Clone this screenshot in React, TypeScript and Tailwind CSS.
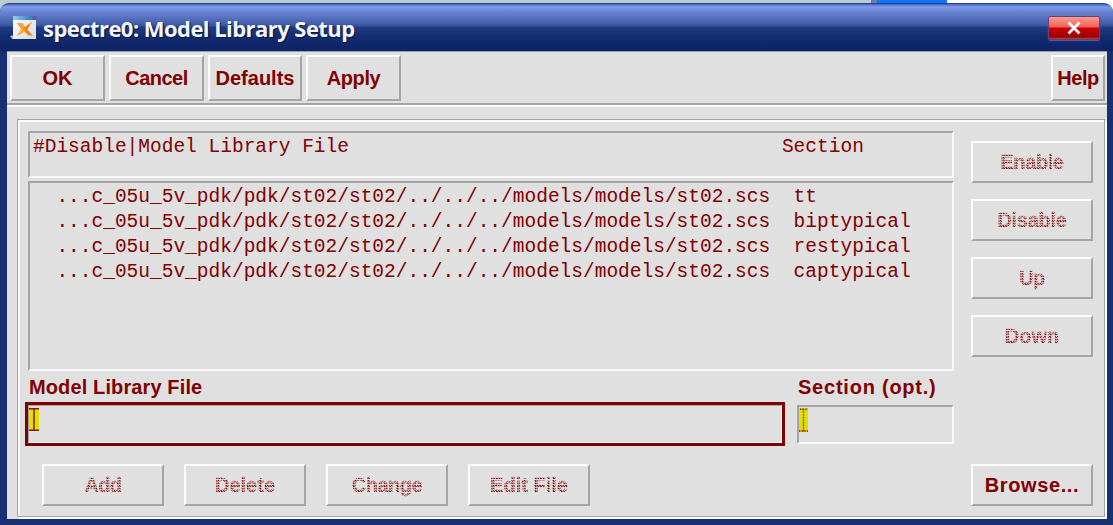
import type { ReactNode } from 'react';
import clsx from 'clsx';

const raised =
  'flex items-center justify-center whitespace-nowrap border-2 border-t-[#fbfbfb] border-l-[#fbfbfb] border-r-[#a4a4a4] border-b-[#a4a4a4]';
const sunken = 'border-2 border-t-[#a4a4a4] border-l-[#a4a4a4] border-r-[#f8f8f8] border-b-[#f8f8f8]';
const stipple =
  '[-webkit-text-stroke:0.3px_#800000] [mask-image:repeating-conic-gradient(#000_0_25%,transparent_0_50%)] [mask-size:2.6px_2.6px]';

function Button({ className, textClass, disabled, children }: {
  className: string;
  textClass?: string;
  disabled?: boolean;
  children: ReactNode;
}) {
  return (
    <button type="button" disabled={disabled} className={clsx(raised, className)}>
      <span className={clsx('block', textClass, disabled && stipple)}>{children}</span>
    </button>
  );
}

function AppIcon() {
  return (
    <svg width="27" height="26" viewBox="0 0 27 26" className="shrink-0">
      <defs>
        <linearGradient id="page" x1="0" y1="0" x2="1" y2="1">
          <stop offset="0" stopColor="#ffffff" />
          <stop offset="1" stopColor="#d2dce4" />
        </linearGradient>
        <linearGradient id="bar" x1="0" y1="0" x2="1" y2="0">
          <stop offset="0" stopColor="#8fd0f0" />
          <stop offset="1" stopColor="#1c62c8" />
        </linearGradient>
      </defs>
      <path d="M0 21 L4 20 L6 24 L2 24Z" fill="#a9b5c4" />
      <rect x="3" y="1" width="23" height="23" fill="url(#page)" />
      <rect x="3" y="1" width="23" height="4" fill="url(#bar)" />
      <rect x="20" y="2" width="2" height="2" fill="#20b070" />
      <rect x="23" y="2" width="2" height="2" fill="#d83050" />
      <path d="M7 8 L12 8 L15 12 L22 6.500 L17.500 14.500 L23 21 L18 20 L14.500 16.500 L7 21 L11.500 14Z" fill="#f58218" />
      <path d="M7 8 L12 8 L15 13 L11.500 14Z" fill="#fba23c" />
      <path d="M11.500 14 L15 15 L14.500 16.500 L7 21Z" fill="#ffb516" />
    </svg>
  );
}

const PATH = '...c_05u_5v_pdk/pdk/st02/st02/../../../models/models/st02.scs';
const sections = ['tt', 'biptypical', 'restypical', 'captypical'];

export default function App() {
  return (
    <div className="relative flex h-[525px] w-[1113px] flex-col overflow-hidden bg-[#173074] font-['Liberation_Sans',sans-serif] text-[20px] leading-[24px] font-bold text-[#800000]">
      <div className="flex h-[11px] shrink-0 bg-[#bccbc9]">
        <div className="ml-[871px] w-[6px] bg-[#7078b4]" />
        <div className="w-[70px] bg-[#0878f8]" />
        <div className="flex-1 bg-white" />
      </div>
      <header className="z-10 -mt-[8px] flex h-[48px] shrink-0 items-center rounded-t-[9px] border-t border-[#24409a] bg-[linear-gradient(#4564b8_0,#809bea_3px,#6d88d6_7px,#4864b0_18px,#38549f_22px,#213c84_23px,#132c70_33px,#0e2266_47px)] pl-[10px]">
        <AppIcon />
        <h1 className="mt-[1px] ml-[6px] font-['Open_Sans',sans-serif] text-[22px] leading-[28px] tracking-[-0.55px] whitespace-nowrap text-[#f4f6fc] [text-shadow:1px_1px_1px_#07143f]">
          spectre0: Model Library Setup
        </h1>
        <button type="button" className="mt-[1px] mr-[13px] ml-auto flex h-[24px] w-[52px] items-center justify-center rounded-[2px] border border-[#6a3d70] bg-[linear-gradient(#ff9a93,#ee6258_10px,#cf0000_11px,#990000_20px,#c84040)] shadow-[0_1px_1px_#4a65ac]">
          <svg width="16" height="14" viewBox="0 0 16 14">
            <path d="M2.500 1.500 L13.500 12.500 M13.500 1.500 L2.500 12.500" stroke="#fff" strokeWidth="2.800" />
          </svg>
        </button>
      </header>
      <main className="mr-[6px] ml-[7px] flex h-[468px] shrink-0 flex-col border-t border-t-[#9a9aa8] bg-[#e0e0e0]">
        <div className="flex h-[53px] shrink-0 gap-[4px] border-b-2 border-b-[#a4a4a4] pt-[3px] pr-[2px] pl-[3px]">
          <Button className="h-[46px] w-[95px]" textClass="">OK</Button>
          <Button className="h-[46px] w-[95px]" textClass="tracking-[-0.500px]">Cancel</Button>
          <Button className="h-[46px] w-[94px]" textClass="">Defaults</Button>
          <Button className="h-[46px] w-[95px]" textClass="tracking-[-0.400px]">Apply</Button>
          <Button className="ml-auto h-[46px] w-[54px]" textClass="tracking-[-0.500px]">Help</Button>
        </div>
        <div className="h-[2px] shrink-0 bg-[#fbfbfb]" />
        <div className="mt-[12px] mr-[2px] ml-[10px] h-[398px] border-[1.500px] border-[#a4a4a4] shadow-[1px_1px_0_#fbfbfb,2px_2px_0_#fbfbfb]">
          <div className="flex h-full border-t-2 border-l-2 border-[#f8f8f8] pt-[9px] pr-[11px]">
            <div className="flex w-[934px] shrink-0 flex-col pl-[8px]">
              <div className={clsx(sunken, "h-[47px] w-[926px] pt-[2px] pl-[3px] font-['Liberation_Mono',monospace] text-[19.500px] leading-[25px] font-normal whitespace-pre")}>
                {'#Disable|Model Library File'.padEnd(64) + 'Section'}
              </div>
              <div className={clsx(sunken, "mt-[3px] h-[190px] w-[926px] pt-[2px] pl-[3px] font-['Liberation_Mono',monospace] text-[19.500px] leading-[25px] font-normal whitespace-pre")}>
                {sections.map((s) => (
                  <div key={s}>{'  ' + PATH + '  ' + s}</div>
                ))}
              </div>
              <div className="flex h-[31px] items-center pt-[1px] pl-[1px]">
                <span className="w-[769px] tracking-[0.120px]">Model Library File</span>
                <span className="tracking-[0.770px] whitespace-nowrap">Section (opt.)</span>
              </div>
              <div className="-ml-[3px] flex items-center">
                <div className="h-[44px] w-[760px] border-[3px] border-[#800000]">
                  <div className="flex h-full border border-t-[#a4a4a4] border-r-white border-b-white border-l-[#a4a4a4] pt-[2px]">
                    <svg width="10" height="23" viewBox="0 0 10 23">
                      <rect width="10" height="23" fill="#e0e000" />
                      <path d="M0 .75H10M0 22.250H10M5 0V23" stroke="#8a1800" strokeWidth="1.500" />
                    </svg>
                  </div>
                </div>
                <div className={clsx(sunken, 'ml-[12px] flex h-[39px] w-[157px] pt-[1px]')}>
                  <svg width="9" height="24" viewBox="0 0 9 24">
                    <rect width="9" height="24" fill="#e0e000" />
                    <path d="M1 1.250H9M0 23H9M4.500 1V24" stroke="#8a1800" strokeWidth="1.300" strokeDasharray="1.400 1.200" />
                  </svg>
                </div>
              </div>
              <div className="mt-[18px] flex gap-[20px] pl-[14px]">
                <Button disabled className="h-[42px] w-[122px]" textClass="tracking-[-0.700px]">Add</Button>
                <Button disabled className="h-[42px] w-[122px]">Delete</Button>
                <Button disabled className="h-[42px] w-[122px]" textClass="tracking-[-0.500px]">Change</Button>
                <Button disabled className="h-[42px] w-[122px]">Edit File</Button>
              </div>
            </div>
            <div className="ml-auto flex flex-col gap-[16px] pt-[10px]">
              <Button disabled className="h-[42px] w-[122px]" textClass="tracking-[-0.400px]">Enable</Button>
              <Button disabled className="h-[42px] w-[122px]" textClass="tracking-[-0.300px]">Disable</Button>
              <Button disabled className="h-[42px] w-[122px]" textClass="tracking-[-0.500px]">Up</Button>
              <Button disabled className="h-[42px] w-[122px]">Down</Button>
              <Button className="mt-[91px] h-[42px] w-[122px]" textClass="tracking-[0.600px]">Browse...</Button>
            </div>
          </div>
        </div>
      </main>
    </div>
  );
}
